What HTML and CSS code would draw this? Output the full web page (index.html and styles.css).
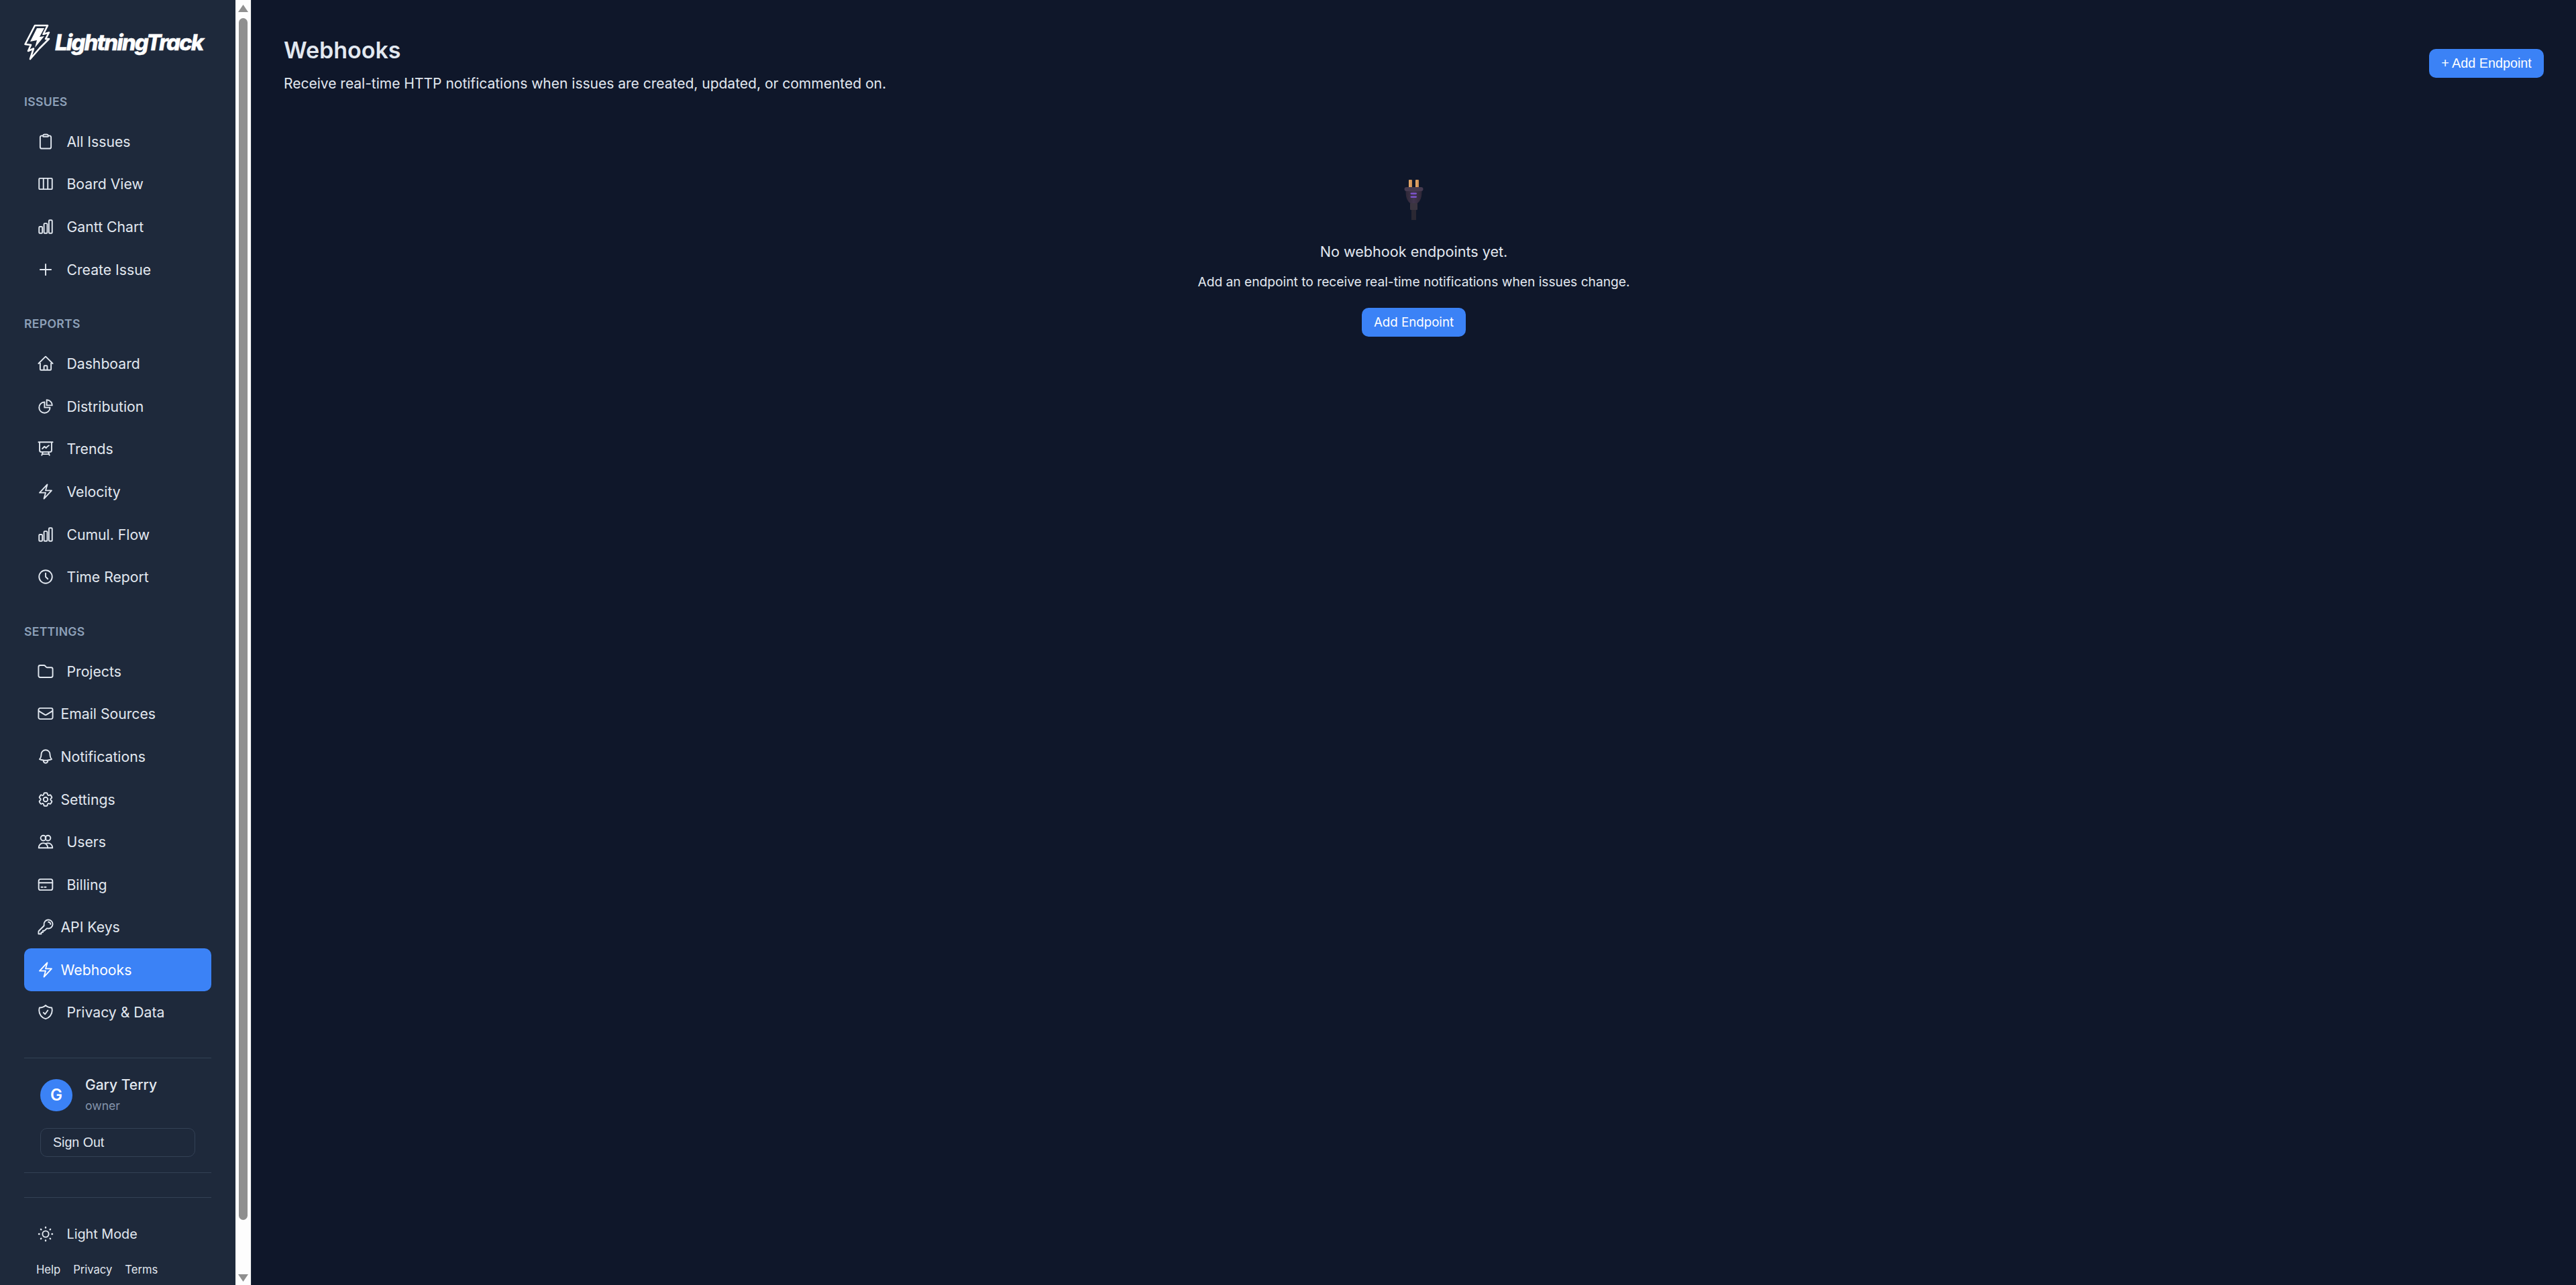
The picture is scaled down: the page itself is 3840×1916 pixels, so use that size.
FILE: index.html
```html
<!DOCTYPE html>
<html lang="en">
<head>
<meta charset="utf-8">
<title>Webhooks - LightningTrack</title>
<link rel="stylesheet" href="styles.css">
</head>
<body>
<div class="app">
  <aside class="sidebar">
    <a class="logo" href="#">
      <svg class="logo-bolt" viewBox="36 36 40 54"><path d="M52 38H71L64.500 51L73 48.500L68 58L73 58L59 72L45 88L50 72.500L42 76L46 67L37.500 66Z"/><path d="M55 42H66L59 55L66 54L52 71L55 60L45 62Z"/></svg>
      <span class="logo-text">LightningTrack</span>
    </a>

    <div class="nav-label">Issues</div>
    <nav class="nav-group">
      <a class="nav-item" href="#"><svg class="icon" viewBox="0 0 24 24"><path d="M15.666 3.888A2.25 2.25 0 0013.5 2.25h-3c-1.03 0-1.9.693-2.166 1.638m7.332 0c.055.194.084.4.084.612v0a.75.75 0 01-.75.75H9a.75.75 0 01-.75-.75v0c0-.212.03-.418.084-.612m7.332 0c.646.049 1.288.11 1.927.184 1.1.128 1.907 1.077 1.907 2.185V19.5a2.25 2.25 0 01-2.25 2.25H6.75A2.25 2.25 0 014.5 19.5V6.257c0-1.108.806-2.057 1.907-2.185a48.208 48.208 0 011.927-.184"/></svg><span>All Issues</span></a>
      <a class="nav-item" href="#"><svg class="icon" viewBox="0 0 24 24"><path d="M9 4.500v15m6-15v15m-10.875 0h15.750c.621 0 1.125-.504 1.125-1.125V5.625c0-.621-.504-1.125-1.125-1.125H4.125C3.504 4.500 3 5.004 3 5.625v12.750c0 .621.504 1.125 1.125 1.125z"/></svg><span>Board View</span></a>
      <a class="nav-item" href="#"><svg class="icon" viewBox="0 0 24 24"><path d="M3 13.125C3 12.504 3.504 12 4.125 12h2.250c.621 0 1.125.504 1.125 1.125v6.750C7.500 20.496 6.996 21 6.375 21h-2.250A1.125 1.125 0 013 19.875v-6.750zM9.750 8.625c0-.621.504-1.125 1.125-1.125h2.250c.621 0 1.125.504 1.125 1.125v11.250c0 .621-.504 1.125-1.125 1.125h-2.250a1.125 1.125 0 01-1.125-1.125V8.625zM16.500 4.125c0-.621.504-1.125 1.125-1.125h2.250C20.496 3 21 3.504 21 4.125v15.750c0 .621-.504 1.125-1.125 1.125h-2.250a1.125 1.125 0 01-1.125-1.125V4.125z"/></svg><span>Gantt Chart</span></a>
      <a class="nav-item" href="#"><svg class="icon" viewBox="0 0 24 24"><path d="M12 4.500v15m7.500-7.500h-15"/></svg><span>Create Issue</span></a>
    </nav>

    <div class="nav-label">Reports</div>
    <nav class="nav-group">
      <a class="nav-item" href="#"><svg class="icon" viewBox="0 0 24 24"><path d="M2.250 12l8.954-8.955c.44-.439 1.152-.439 1.591 0L21.750 12M4.500 9.750v10.125c0 .621.504 1.125 1.125 1.125H9.750v-4.875c0-.621.504-1.125 1.125-1.125h2.250c.621 0 1.125.504 1.125 1.125V21h4.125c.621 0 1.125-.504 1.125-1.125V9.750M8.250 21h8.250"/></svg><span>Dashboard</span></a>
      <a class="nav-item" href="#"><svg class="icon" viewBox="0 0 24 24"><path d="M10.500 6a7.500 7.500 0 107.500 7.500h-7.500V6z"/><path d="M13.500 10.500H21A7.500 7.500 0 0013.500 3v7.500z"/></svg><span>Distribution</span></a>
      <a class="nav-item" href="#"><svg class="icon" viewBox="0 0 24 24"><path d="M3.750 3v11.250A2.250 2.250 0 006 16.500h2.250M3.750 3h-1.500m1.500 0h16.500m0 0h1.500m-1.500 0v11.250A2.250 2.250 0 0118 16.500h-2.250m-7.500 0h7.500m-7.500 0l-1 3m8.500-3l1 3m0 0l.5 1.500m-.5-1.500h-9.500m0 0l-.5 1.500m.75-9l3-3 2.148 2.148A12.061 12.061 0 0116.500 7.605"/></svg><span>Trends</span></a>
      <a class="nav-item" href="#"><svg class="icon" viewBox="0 0 24 24"><path d="M3.750 13.500l10.500-11.250L12 10.500h8.250L9.750 21.750 12 13.500H3.750z"/></svg><span>Velocity</span></a>
      <a class="nav-item" href="#"><svg class="icon" viewBox="0 0 24 24"><path d="M3 13.125C3 12.504 3.504 12 4.125 12h2.250c.621 0 1.125.504 1.125 1.125v6.750C7.500 20.496 6.996 21 6.375 21h-2.250A1.125 1.125 0 013 19.875v-6.750zM9.750 8.625c0-.621.504-1.125 1.125-1.125h2.250c.621 0 1.125.504 1.125 1.125v11.250c0 .621-.504 1.125-1.125 1.125h-2.250a1.125 1.125 0 01-1.125-1.125V8.625zM16.500 4.125c0-.621.504-1.125 1.125-1.125h2.250C20.496 3 21 3.504 21 4.125v15.750c0 .621-.504 1.125-1.125 1.125h-2.250a1.125 1.125 0 01-1.125-1.125V4.125z"/></svg><span>Cumul. Flow</span></a>
      <a class="nav-item" href="#"><svg class="icon" viewBox="0 0 24 24"><circle cx="12" cy="12" r="9"/><path d="M12 7v5l3 3"/></svg><span>Time Report</span></a>
    </nav>

    <div class="nav-label">Settings</div>
    <nav class="nav-group">
      <a class="nav-item" href="#"><svg class="icon" viewBox="0 0 24 24"><path d="M2.250 18V6A2.250 2.250 0 014.500 3.750h5.379a1.500 1.500 0 011.061.44l2.120 2.120a1.500 1.500 0 001.061.44H19.500A2.250 2.250 0 0121.750 9v9a2.250 2.250 0 01-2.250 2.250h-15A2.250 2.250 0 012.250 18z"/></svg><span>Projects</span></a>
      <a class="nav-item nav-item-tight" href="#"><svg class="icon" viewBox="0 0 24 24"><path d="M21.750 6.750v10.500a2.250 2.250 0 01-2.250 2.250h-15a2.250 2.250 0 01-2.250-2.250V6.750m19.500 0A2.250 2.250 0 0019.500 4.500h-15a2.250 2.250 0 00-2.250 2.250m19.500 0v.243a2.250 2.250 0 01-1.070 1.916l-7.500 4.615a2.250 2.250 0 01-2.360 0L3.320 8.910a2.250 2.250 0 01-1.070-1.916V6.750"/></svg><span>Email Sources</span></a>
      <a class="nav-item nav-item-tight" href="#"><svg class="icon" viewBox="0 0 24 24"><path d="M14.857 17.082a23.848 23.848 0 005.454-1.310A8.967 8.967 0 0118 9.750v-.7V9A6 6 0 006 9v.75a8.967 8.967 0 01-2.312 6.022c1.733.64 3.560 1.085 5.455 1.310m5.714 0a24.255 24.255 0 01-5.714 0m5.714 0a3 3 0 11-5.714 0"/></svg><span>Notifications</span></a>
      <a class="nav-item nav-item-tight" href="#"><svg class="icon" viewBox="0 0 24 24"><path d="M9.594 3.940c.09-.542.56-.94 1.110-.94h2.593c.55 0 1.020.398 1.110.94l.213 1.281c.063.374.313.686.645.87.074.04.147.083.22.127.324.196.72.257 1.075.124l1.217-.456a1.125 1.125 0 011.370.49l1.296 2.247a1.125 1.125 0 01-.26 1.431l-1.003.827c-.293.24-.438.613-.431.992a6.759 6.759 0 010 .255c-.007.378.138.75.43.99l1.005.828c.424.35.534.954.26 1.430l-1.298 2.247a1.125 1.125 0 01-1.369.491l-1.217-.456c-.355-.133-.75-.072-1.076.124a6.570 6.570 0 01-.22.128c-.331.183-.581.495-.644.869l-.213 1.280c-.09.543-.56.941-1.110.941h-2.594c-.55 0-1.020-.398-1.110-.94l-.213-1.281c-.062-.374-.312-.686-.644-.87a6.520 6.520 0 01-.22-.127c-.325-.196-.72-.257-1.076-.124l-1.217.456a1.125 1.125 0 01-1.369-.49l-1.297-2.247a1.125 1.125 0 01.26-1.431l1.004-.827c.292-.24.437-.613.43-.992a6.932 6.932 0 010-.255c.007-.378-.138-.75-.43-.99l-1.004-.828a1.125 1.125 0 01-.26-1.430l1.297-2.247a1.125 1.125 0 011.370-.491l1.216.456c.356.133.751.072 1.076-.124.072-.044.146-.087.22-.128.332-.183.582-.495.644-.869l.214-1.281z"/><path d="M15 12a3 3 0 11-6 0 3 3 0 016 0z"/></svg><span>Settings</span></a>
      <a class="nav-item" href="#"><svg class="icon" viewBox="0 0 24 24"><circle cx="8.800" cy="7" r="3.600"/><circle cx="15.200" cy="7" r="3.600"/><path d="M2.500 20.500c0-3.800 2.600-6.500 6.200-6.500s6.300 2.700 6.300 6.500z"/><path d="M12.500 14.700a6.500 6.500 0 012.700-.7c3.600 0 6.300 2.700 6.300 6.500h-6.500"/></svg><span>Users</span></a>
      <a class="nav-item" href="#"><svg class="icon" viewBox="0 0 24 24"><rect x="2.500" y="4.500" width="19" height="15" rx="2.500"/><path d="M2.500 9.500h19M6 15.500h2m2.500 0h2"/></svg><span>Billing</span></a>
      <a class="nav-item nav-item-tight" href="#"><svg class="icon" viewBox="0 0 24 24"><path d="M15.750 5.250a3 3 0 013 3m3 0a6 6 0 01-7.029 5.912c-.563-.097-1.159.026-1.563.43L10.500 17.250H8.250v2.250H6v2.250H2.250v-2.818c0-.597.237-1.170.659-1.591l6.499-6.499c.404-.404.527-1 .43-1.563A6 6 0 1121.750 8.250z"/></svg><span>API Keys</span></a>
      <a class="nav-item nav-item-tight nav-item-active" href="#"><svg class="icon" viewBox="0 0 24 24"><path d="M3.750 13.500l10.500-11.250L12 10.500h8.250L9.750 21.750 12 13.500H3.750z"/></svg><span>Webhooks</span></a>
      <a class="nav-item" href="#"><svg class="icon" viewBox="0 0 24 24"><path d="M9 12.750L11.250 15 15 9.750m-3-7.036A11.959 11.959 0 013.598 6 11.990 11.990 0 003 9.749c0 5.592 3.824 10.290 9 11.623 5.176-1.332 9-6.030 9-11.622 0-1.310-.21-2.571-.598-3.751h-.152c-3.196 0-6.100-1.248-8.250-3.286z"/></svg><span>Privacy &amp; Data</span></a>
    </nav>

    <section class="user-box">
      <div class="user-row">
        <div class="avatar">G</div>
        <div class="user-meta">
          <div class="user-name">Gary Terry</div>
          <div class="user-role">owner</div>
        </div>
      </div>
      <button class="sign-out" type="button">Sign Out</button>
    </section>

    <div class="spacer-box"></div>

    <a class="nav-item theme-toggle" href="#"><svg class="icon" viewBox="0 0 24 24"><circle cx="12" cy="12" r="4.250"/><path class="rays" d="M12 2.750v.5M12 20.750v.5M2.750 12h.5M20.750 12h.5M5.500 5.500l.35.35M18.150 18.150l.35.35M5.500 18.500l.35-.35M18.150 5.850l.35-.35"/></svg><span>Light Mode</span></a>
    <div class="foot-links">
      <a href="#">Help</a>
      <a href="#">Privacy</a>
      <a href="#">Terms</a>
    </div>
  </aside>

  <div class="scrollbar" aria-hidden="true">
    <div class="arrow arrow-up"></div>
    <div class="thumb"></div>
    <div class="arrow arrow-down"></div>
  </div>

  <main class="main">
    <header class="page-head">
      <div class="page-titles">
        <h1 class="page-title">Webhooks</h1>
        <p class="page-sub">Receive real-time HTTP notifications when issues are created, updated, or commented on.</p>
      </div>
      <button class="btn btn-head" type="button">+ Add Endpoint</button>
    </header>

    <section class="empty">
      <svg class="plug" viewBox="0 0 30 60" role="img" aria-label="Plug">
        <defs>
          <linearGradient id="prong" x1="0" y1="0" x2="1" y2="0"><stop offset="0" stop-color="#e8ac6c"/><stop offset="1" stop-color="#c98a50"/></linearGradient>
          <linearGradient id="body" x1="0" y1="0" x2="1" y2="0"><stop offset="0" stop-color="#2f2838"/><stop offset=".5" stop-color="#41364d"/><stop offset="1" stop-color="#2f2838"/></linearGradient>
        </defs>
        <rect x="7" y="0" width="5" height="12" rx="1" fill="url(#prong)"/>
        <rect x="17" y="0" width="5" height="12" rx="1" fill="url(#prong)"/>
        <path d="M2.500 16H26.500C26.500 26 25 31 19 36H10C4 31 2.500 26 2.500 16Z" fill="url(#body)"/>
        <rect x="0.500" y="11" width="28" height="6" rx="3" fill="#453a4f"/>
        <rect x="9.500" y="19.500" width="9.500" height="2.200" rx="1.100" fill="#8256d8"/>
        <rect x="9.500" y="24.500" width="9.500" height="2.200" rx="1.100" fill="#8256d8"/>
        <rect x="9" y="35" width="11" height="10" rx="1" fill="#3b3540"/>
        <rect x="11" y="45" width="7" height="15" fill="#2b2833"/>
      </svg>
      <p class="empty-title">No webhook endpoints yet.</p>
      <p class="empty-sub">Add an endpoint to receive real-time notifications when issues change.</p>
      <button class="btn btn-empty" type="button">Add Endpoint</button>
    </section>
  </main>
</div>
</body>
</html>
```

FILE: styles.css
```css
* { box-sizing: border-box; }

html, body {
  margin: 0;
  height: 100%;
  overflow: hidden;
  background: #0f172a;
  color: #e2e8f0;
  font-family: Inter, "Liberation Sans", sans-serif;
}

a { color: inherit; text-decoration: none; }

.app {
  display: flex;
  height: 1916px;
}

/* Sidebar */
.sidebar {
  flex: none;
  width: 351px;
  height: 100%;
  padding: 36px 36px 0;
  background: #1e293b;
  overflow: hidden;
}

.logo {
  display: flex;
  align-items: center;
  gap: 6px;
  height: 54px;
  margin-bottom: 50px;
  color: #fff;
}

.logo-bolt {
  flex: none;
  width: 40px;
  height: 54px;
  fill: none;
  stroke: #fff;
  stroke-width: 2.600;
  stroke-linejoin: round;
}

.logo-bolt path + path {
  fill: #fff;
  stroke: none;
}

.logo-text {
  font-size: 33px;
  font-weight: 800;
  font-style: italic;
  letter-spacing: -1.900px;
  line-height: 1;
  white-space: nowrap;
  -webkit-text-stroke: .4px #fff;
}

.nav-label {
  height: 24px;
  line-height: 24px;
  margin-bottom: 15px;
  font-size: 17.600px;
  font-weight: 600;
  letter-spacing: .3px;
  text-transform: uppercase;
  color: #8da0b8;
}

.nav-group {
  display: flex;
  flex-direction: column;
  margin-bottom: 38px;
}

.nav-item {
  display: flex;
  align-items: center;
  gap: 19px;
  height: 63.600px;
  padding-left: 18.500px;
  border-radius: 10px;
  font-size: 21.200px;
  color: #e2e8f0;
  white-space: nowrap;
}

.nav-item-tight { gap: 10px; }

.nav-item-active {
  background: #3b82f6;
  color: #fff;
}

.icon {
  flex: none;
  width: 26px;
  height: 26px;
  fill: none;
  stroke: currentColor;
  stroke-linecap: round;
  stroke-linejoin: round;
}

.icon path, .icon circle, .icon rect {
  stroke-width: 1.900px;
  vector-effect: non-scaling-stroke;
}

.icon .rays { stroke-width: 2.400px; }

/* User block */
.user-box {
  margin-top: -2px;
  padding: 31px 24px 23px;
  border-top: 1px solid #334155;
  border-bottom: 1px solid #334155;
}

.user-row {
  display: flex;
  align-items: center;
  gap: 19px;
  height: 48px;
}

.avatar {
  flex: none;
  width: 48px;
  height: 48px;
  border-radius: 50%;
  background: #3b82f6;
  color: #fff;
  font-size: 24px;
  font-weight: 600;
  line-height: 48px;
  text-align: center;
}

.user-name {
  font-size: 21px;
  font-weight: 500;
  line-height: 24px;
}

.user-role {
  margin-top: 8px;
  font-size: 17.600px;
  line-height: 22px;
  color: #8494ab;
}

.sign-out {
  display: block;
  width: 231px;
  height: 43px;
  margin-top: 25px;
  padding: 0 0 0 18px;
  border: 1px solid #334155;
  border-radius: 10px;
  background: transparent;
  color: #e2e8f0;
  font-family: "Liberation Sans", Arial, sans-serif;
  font-size: 19.600px;
  text-align: left;
}

.spacer-box {
  height: 37px;
  border-bottom: 1px solid #334155;
}

.theme-toggle {
  margin-top: 22px;
  font-size: 19.800px;
}

.foot-links {
  display: flex;
  gap: 19px;
  margin-top: 10px;
  padding-left: 18px;
  font-size: 16.600px;
  line-height: 22px;
}

/* Fake browser scrollbar */
.scrollbar {
  flex: none;
  display: flex;
  flex-direction: column;
  align-items: center;
  width: 24px;
  height: 100%;
  padding: 7px 0 5px;
  background: #fdfdfd;
  border-right: 1px solid #1e293b;
}

.arrow {
  width: 15px;
  height: 11px;
  background: #8f8f8f;
}

.arrow-up { clip-path: polygon(50% 0, 100% 100%, 0 100%); }
.arrow-down {
  clip-path: polygon(0 0, 100% 0, 50% 100%);
  margin-top: auto;
}

.thumb {
  width: 13px;
  height: 1792px;
  margin-top: 9px;
  border-radius: 7px;
  background: #8f8f8f;
}

/* Main */
.main {
  flex: 1;
  min-width: 0;
  padding: 48px 48px 0;
  background: #0f172a;
}

.page-head {
  display: flex;
  justify-content: space-between;
  align-items: center;
}

.page-title {
  margin: 0;
  font-size: 34px;
  font-weight: 600;
  line-height: 54px;
  color: #e2e8f0;
}

.page-sub {
  margin: 8px 0 0;
  font-size: 21px;
  line-height: 30px;
  color: #e2e8f0;
}

.btn {
  display: block;
  height: 43px;
  padding: 0;
  border: 0;
  border-radius: 10px;
  background: #3b82f6;
  color: #fff;
}

.btn-head {
  width: 171px;
  font-family: "Liberation Sans", Arial, sans-serif;
  font-size: 19.800px;
}

.btn-empty {
  width: 155px;
  margin-top: 25px;
  font-family: Inter, sans-serif;
  font-size: 18.700px;
}

.empty {
  display: flex;
  flex-direction: column;
  align-items: center;
  padding-top: 128px;
}

.plug {
  display: block;
  width: 30px;
  height: 60px;
}

.empty-title {
  margin: 32px 0 0;
  font-size: 21.600px;
  line-height: 30px;
  color: #e2e8f0;
}

.empty-sub {
  margin: 16px 0 0;
  font-size: 19.200px;
  line-height: 28px;
  color: #e2e8f0;
}
```
